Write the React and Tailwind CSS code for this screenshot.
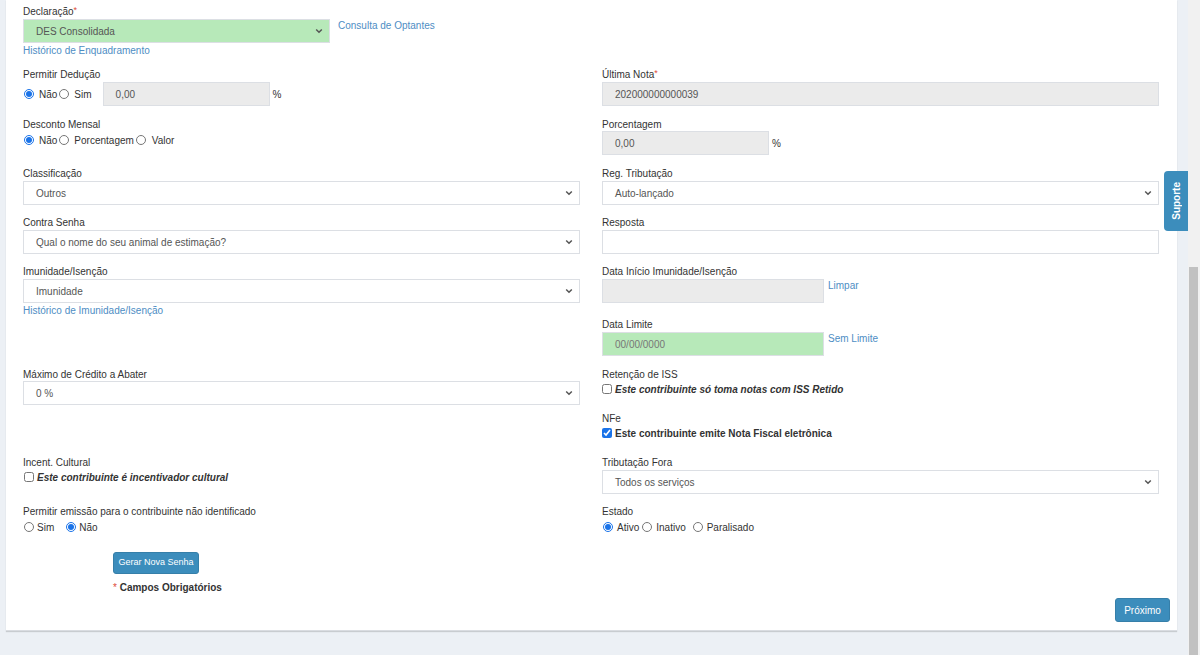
import React from "react";

const Chevron = () => (
  <svg width="8" height="6" viewBox="0 0 8 6" className="shrink-0">
    <path d="M1.2 1.5 L4 4.3 L6.8 1.5" fill="none" stroke="#555" strokeWidth="1.5" />
  </svg>
);

const Label = ({ children, req }) => (
  <div className="h-[14px] leading-[16px] text-[#333] whitespace-nowrap">
    {children}
    {req && <span className="text-[#dd4b39] text-[9px] align-top leading-[13px]">*</span>}
  </div>
);

const Select = ({ value, className = "", green }) => (
  <div
    className={
      "h-[24px] border border-[#dcdfe4] flex items-center pl-[12px] pr-[6px] text-[#555] " +
      (green ? "bg-[#b7e9b9] border-[#b7e9b9] " : "bg-white ") +
      className
    }
  >
    <span className="flex-1 whitespace-nowrap">{value}</span>
    <Chevron />
  </div>
);

const Input = ({ value = "", className = "", bg = "bg-white", color = "text-[#555]" }) => (
  <div
    className={
      "h-[24px] border border-[#dcdfe4] flex items-center pl-[12px] " + bg + " " + color + " " + className
    }
  >
    {value}
  </div>
);

const Radio = ({ checked, className = "" }) => (
  <input
    type="radio"
    readOnly
    checked={!!checked}
    className={"w-[10px] h-[10px] m-0 accent-[#1a73e8] shrink-0 " + className}
  />
);

const Check = ({ checked, className = "" }) => (
  <input
    type="checkbox"
    readOnly
    checked={!!checked}
    className={"w-[10px] h-[10px] m-0 accent-[#1a73e8] shrink-0 " + className}
  />
);

const Link = ({ children, className = "" }) => (
  <span className={"text-[#4e8dc4] leading-[14px] whitespace-nowrap " + className}>{children}</span>
);

const Row = ({ h, children }) => (
  <div className={"grid grid-cols-[557px_557px] gap-x-[22px] " + h}>{children}</div>
);

export default function App() {
  return (
    <div className="w-[1200px] h-[655px] flex overflow-hidden bg-[#ecf0f5] relative font-['Liberation_Sans',Arial,sans-serif] text-[10px]">
      <div className="flex-1 flex flex-col">
        <div className="bg-white ml-[6px] mr-[11px] pl-[17px] pr-[7px] pt-[4px] pb-[8px] shadow-[0_1px_1px_rgba(0,0,0,0.15)] border-b border-[#d9dce1]">
          <div className="mr-[11px]">
            {/* Row 1 */}
            <Row h="h-[63px]">
              <div>
                <Label req>Declaração</Label>
                <div className="flex items-start mt-[1px]">
                  <Select value="DES Consolidada" green className="w-[307px]" />
                  <Link className="ml-[8px]">Consulta de Optantes</Link>
                </div>
                <div className="h-[14px] leading-[16px]">
                  <Link className="leading-[16px]">Histórico de Enquadramento</Link>
                </div>
              </div>
              <div />
            </Row>

            {/* Row 2 */}
            <Row h="h-[50px]">
              <div>
                <Label>Permitir Dedução</Label>
                <div className="flex items-center h-[24px] mt-[1px] text-[#333]">
                  <Radio checked className="ml-[1px]" />
                  <span className="ml-[5px]">Não</span>
                  <Radio className="ml-[2px]" />
                  <span className="ml-[5px]">Sim</span>
                  <Input value="0,00" bg="bg-[#ebebeb]" className="w-[167px] ml-[11px]" />
                  <span className="ml-[3px]">%</span>
                </div>
              </div>
              <div>
                <Label req>Última Nota</Label>
                <Input value="202000000000039" bg="bg-[#ebebeb]" className="mt-[1px]" />
              </div>
            </Row>

            {/* Row 3 */}
            <Row h="h-[49px]">
              <div>
                <Label>Desconto Mensal</Label>
                <div className="flex items-center h-[18px] text-[#333]">
                  <Radio checked className="ml-[1px]" />
                  <span className="ml-[5px]">Não</span>
                  <Radio className="ml-[2px]" />
                  <span className="ml-[5px]">Porcentagem</span>
                  <Radio className="ml-[2px]" />
                  <span className="ml-[6px]">Valor</span>
                </div>
              </div>
              <div>
                <Label>Porcentagem</Label>
                <div className="flex items-center text-[#333]">
                  <Input value="0,00" bg="bg-[#ebebeb]" className="w-[167px]" />
                  <span className="ml-[3px]">%</span>
                </div>
              </div>
            </Row>

            {/* Row 4 */}
            <Row h="h-[49px]">
              <div>
                <Label>Classificação</Label>
                <Select value="Outros" className="mt-[1px]" />
              </div>
              <div>
                <Label>Reg. Tributação</Label>
                <Select value="Auto-lançado" className="mt-[1px]" />
              </div>
            </Row>

            {/* Row 5 */}
            <Row h="h-[49px]">
              <div>
                <Label>Contra Senha</Label>
                <Select value="Qual o nome do seu animal de estimação?" className="mt-[1px]" />
              </div>
              <div>
                <Label>Resposta</Label>
                <Input className="mt-[1px]" />
              </div>
            </Row>

            {/* Row 6 */}
            <Row h="h-[53px]">
              <div>
                <Label>Imunidade/Isenção</Label>
                <Select value="Imunidade" className="mt-[1px]" />
                <div className="h-[14px] leading-[16px]">
                  <Link className="leading-[16px]">Histórico de Imunidade/Isenção</Link>
                </div>
              </div>
              <div>
                <Label>Data Início Imunidade/Isenção</Label>
                <div className="flex items-start mt-[1px]">
                  <Input bg="bg-[#ebebeb]" className="w-[222px]" />
                  <Link className="ml-[4px]">Limpar</Link>
                </div>
              </div>
            </Row>

            {/* Row 7 */}
            <Row h="h-[50px]">
              <div />
              <div>
                <Label>Data Limite</Label>
                <div className="flex items-start mt-[1px]">
                  <Input
                    value="00/00/0000"
                    bg="bg-[#b7e9b9]"
                    color="text-[#777]"
                    className="w-[222px] border-[#b7e9b9]"
                  />
                  <Link className="ml-[4px]">Sem Limite</Link>
                </div>
              </div>
            </Row>

            {/* Row 8 */}
            <Row h="h-[44px]">
              <div>
                <Label>Máximo de Crédito a Abater</Label>
                <Select value="0 %" />
              </div>
              <div>
                <Label>Retenção de ISS</Label>
                <div className="flex items-center h-[14px] mt-[1px] text-[#333]">
                  <Check />
                  <span className="ml-[3px] font-bold italic">Este contribuinte só toma notas com ISS Retido</span>
                </div>
              </div>
            </Row>

            {/* Row 9 */}
            <Row h="h-[44px]">
              <div />
              <div>
                <Label>NFe</Label>
                <div className="flex items-center h-[14px] mt-[1px] text-[#333]">
                  <Check checked />
                  <span className="ml-[3px] font-bold">Este contribuinte emite Nota Fiscal eletrônica</span>
                </div>
              </div>
            </Row>

            {/* Row 10 */}
            <Row h="h-[49px]">
              <div>
                <Label>Incent. Cultural</Label>
                <div className="flex items-center h-[14px] mt-[1px] text-[#333]">
                  <Check className="ml-[1px]" />
                  <span className="ml-[3px] font-bold italic">Este contribuinte é incentivador cultural</span>
                </div>
              </div>
              <div>
                <Label>Tributação Fora</Label>
                <Select value="Todos os serviços" className="mt-[1px]" />
              </div>
            </Row>

            {/* Row 11 */}
            <Row h="h-[30px]">
              <div>
                <Label>Permitir emissão para o contribuinte não identificado</Label>
                <div className="flex items-center h-[14px] mt-[2px] text-[#333]">
                  <Radio className="ml-[1px]" />
                  <span className="ml-[3px]">Sim</span>
                  <Radio checked className="ml-[12px]" />
                  <span className="ml-[3px]">Não</span>
                </div>
              </div>
              <div>
                <Label>Estado</Label>
                <div className="flex items-center h-[14px] mt-[2px] text-[#333]">
                  <Radio checked className="ml-[1px]" />
                  <span className="ml-[4px]">Ativo</span>
                  <Radio className="ml-[3px]" />
                  <span className="ml-[4px]">Inativo</span>
                  <Radio className="ml-[7px]" />
                  <span className="ml-[4px]">Paralisado</span>
                </div>
              </div>
            </Row>

            <div className="mt-[18px] ml-[90px]">
              <div className="w-[86px] h-[22px] bg-[#3c8dbc] border border-[#367fa9] rounded-[3px] flex items-center justify-center text-white text-[9px]">
                Gerar Nova Senha
              </div>
              <div className="mt-[7px] h-[14px] leading-[14px] font-bold text-[#333]">
                <span className="text-[#dd4b39] font-normal">*</span> Campos Obrigatórios
              </div>
            </div>
          </div>

          <div className="flex justify-end mt-[3px]">
            <div className="w-[55px] h-[24px] bg-[#3c8dbc] border border-[#367fa9] rounded-[3px] flex items-center justify-center text-white text-[10px]">
              Próximo
            </div>
          </div>
        </div>
      </div>

      {/* Scrollbar */}
      <div className="w-[12px] h-full bg-[#f1f1f1] flex flex-col">
        <div className="h-[267px] shrink-0" />
        <div className="flex-1 ml-[1px] mr-[2px] bg-[#c1c1c1]" />
      </div>

      {/* Suporte tab */}
      <div className="absolute top-[171px] right-[12px] w-[24px] h-[60px] bg-[#3c8dbc] rounded-l-[4px] flex items-center justify-center">
        <span className="text-white font-bold text-[10px] [writing-mode:vertical-rl] rotate-180">Suporte</span>
      </div>
    </div>
  );
}
